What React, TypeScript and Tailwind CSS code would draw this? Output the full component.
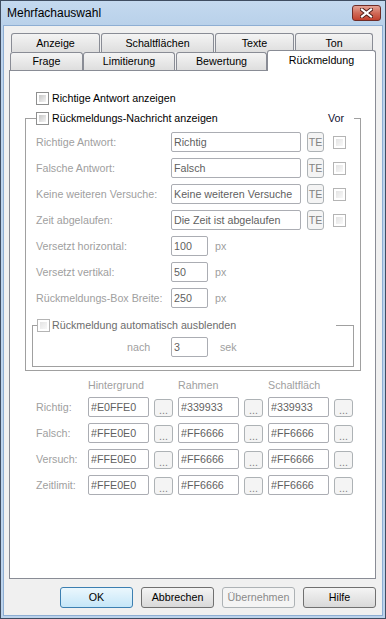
import React from "react";

type BoxProps = { disabled?: boolean; className?: string };

// kleines Windows-7-Kontrollkästchen
const Box: React.FC<BoxProps> = ({ disabled = false, className = "" }) =>
  disabled ? (
    <span className={`block h-[13px] w-[13px] shrink-0 border border-[#b4b4b4] bg-white p-[2px] ${className}`}>
      <span className="block h-full w-full bg-linear-to-br from-[#e4e4e4] to-[#f8f8f8]" />
    </span>
  ) : (
    <span className={`block h-[13px] w-[13px] shrink-0 border border-[#8e8f8f] bg-white p-[2px] ${className}`}>
      <span className="block h-full w-full bg-linear-to-br from-[#c8c8c8] to-[#f4f4f4]" />
    </span>
  );

const Field: React.FC<{ value: string; w: string }> = ({ value, w }) => (
  <input
    readOnly
    value={value}
    className={`h-[20px] shrink-0 rounded-[2px] border border-[#abadb3] bg-white px-[2px] text-[#5f5f5f] outline-none ${w}`}
  />
);

const SmallBtn: React.FC<{ label: string; className?: string }> = ({ label, className = "" }) => (
  <button
    type="button"
    className={`flex shrink-0 items-center justify-center rounded-[3px] border border-[#adb2b5] bg-[#f4f4f4] text-[#838383] ${className}`}
  >
    {label}
  </button>
);

const rowTabs = [
  { label: "Anzeige", cls: "ml-[2px] w-[89px]" },
  { label: "Schaltflächen", cls: "ml-[1px] w-[113px]" },
  { label: "Texte", cls: "ml-[1px] w-[79px]" },
  { label: "Ton", cls: "ml-[1px] w-[78px]" },
];

const frontTabs = [
  { label: "Frage", cls: "ml-[1px] w-[73px]" },
  { label: "Limitierung", cls: "w-[92px]" },
  { label: "Bewertung", cls: "ml-[1px] w-[91px]" },
];

const tabClass =
  "flex items-center justify-center rounded-t-[3px] border border-b-0 border-[#898c95] bg-linear-to-b from-[#f4f4f4] to-[#dedede]";

const texts = [
  { label: "Richtige Antwort:", value: "Richtig" },
  { label: "Falsche Antwort:", value: "Falsch" },
  { label: "Keine weiteren Versuche:", value: "Keine weiteren Versuche" },
  { label: "Zeit abgelaufen:", value: "Die Zeit ist abgelaufen" },
];

const numbers = [
  { label: "Versetzt horizontal:", value: "100" },
  { label: "Versetzt vertikal:", value: "50" },
  { label: "Rückmeldungs-Box Breite:", value: "250" },
];

const colors = [
  { label: "Richtig:", values: ["#E0FFE0", "#339933", "#339933"] },
  { label: "Falsch:", values: ["#FFE0E0", "#FF6666", "#FF6666"] },
  { label: "Versuch:", values: ["#FFE0E0", "#FF6666", "#FF6666"] },
  { label: "Zeitlimit:", values: ["#FFE0E0", "#FF6666", "#FF6666"] },
];

const App: React.FC = () => {
  return (
    <div className="h-[619px] w-[386px] overflow-hidden border border-[#3f4d61] bg-[#bcd3ec] font-['Liberation_Sans',Arial,sans-serif] text-[10.7px] leading-[13px] text-black">
      <div className="flex h-full flex-col px-[2px] pb-[2px]">
        {/* Titelleiste */}
        <div className="-mx-[2px] flex h-[24px] shrink-0 items-center justify-between bg-linear-to-b from-[#c4d9ef] to-[#b9d1ea] pl-[6px] pr-[4px]">
          <span className="text-[12px] text-black">Mehrfachauswahl</span>
          <button
            type="button"
            className="flex h-[16px] w-[29px] items-center justify-center rounded-[3px] border border-[#6e2c27] bg-linear-to-b from-[#e4a395] via-[#d06a58] to-[#c2402c]"
            aria-label="Schließen"
          >
            <svg width="13" height="10" viewBox="0 0 13 10">
              <path d="M2 1.5 L11 8.5 M11 1.5 L2 8.5" stroke="#4a1a16" strokeWidth="4" strokeLinecap="square" />
              <path d="M2 1.5 L11 8.5 M11 1.5 L2 8.5" stroke="#ffffff" strokeWidth="2.2" strokeLinecap="square" />
            </svg>
          </button>
        </div>

        {/* Inhalt */}
        <div className="flex flex-1 flex-col border border-[#8eaed3] bg-[#f0f0f0]">
          <div className="ml-[5px] mt-[7px] w-[367px]">
            <div className="flex h-[19px]">
              {rowTabs.map((t) => (
                <div key={t.label} className={`${tabClass} ${t.cls}`}>
                  {t.label}
                </div>
              ))}
            </div>
            <div className="flex h-[18px] items-end">
              {frontTabs.map((t) => (
                <div key={t.label} className={`${tabClass} h-[18px] ${t.cls}`}>
                  {t.label}
                </div>
              ))}
              <div className="relative z-10 -mb-px flex h-[21px] w-[109px] items-start justify-center rounded-t-[3px] border border-b-0 border-[#898c95] bg-white pt-[3px]">
                Rückmeldung
              </div>
            </div>

            {/* Register Rückmeldung */}
            <div className="h-[509px] border border-[#898c95] bg-white">
              <div className="ml-[26px] mt-[21px] flex h-[13px] items-center">
                <Box />
                <span className="ml-[3px]">Richtige Antwort anzeigen</span>
              </div>

              <div className="ml-[15px] mt-[7px] w-[336px]">
                <div className="flex h-[13px]">
                  <div className="mt-[6px] w-[11px] border-l border-t border-[#a0a0a0]" />
                  <Box />
                  <span className="ml-[3px]">Rückmeldungs-Nachricht anzeigen</span>
                  <div className="flex-1" />
                  <span className="text-[#101030]">Vor</span>
                  <div className="w-[10px]" />
                  <div className="mt-[6px] w-[7px] border-r border-t border-[#a0a0a0]" />
                </div>

                <div className="border-x border-b border-[#a0a0a0] pb-[3px] pt-[7px]">
                  <div className="flex flex-col gap-[6px] pl-[10px]">
                    {texts.map((r) => (
                      <div key={r.label} className="flex h-[20px] items-center">
                        <span className="w-[135px] shrink-0 text-[#a0a0a0]">{r.label}</span>
                        <Field value={r.value} w="w-[130px]" />
                        <SmallBtn label="TE" className="ml-[6px] h-[20px] w-[17px]" />
                        <Box disabled className="ml-[9px]" />
                      </div>
                    ))}
                    {numbers.map((r) => (
                      <div key={r.label} className="flex h-[20px] items-center">
                        <span className="w-[135px] shrink-0 text-[#a0a0a0]">{r.label}</span>
                        <Field value={r.value} w="w-[37px]" />
                        <span className="ml-[7px] text-[#a0a0a0]">px</span>
                      </div>
                    ))}
                  </div>

                  <div className="mx-[6px] mt-[11px]">
                    <div className="flex h-[13px]">
                      <div className="mt-[6px] w-[5px] border-l border-t border-[#a0a0a0]" />
                      <Box disabled />
                      <span className="ml-[2px] text-[#6d6d6d]">Rückmeldung automatisch ausblenden</span>
                      <div className="flex-1" />
                      <div className="mt-[6px] w-[18px] border-r border-t border-[#a0a0a0]" />
                    </div>
                    <div className="border-x border-b border-[#a0a0a0] pb-[9px] pt-[5px]">
                      <div className="flex h-[20px] items-center">
                        <span className="ml-[94px] w-[44px] shrink-0 text-[#a0a0a0]">nach</span>
                        <Field value="3" w="w-[37px]" />
                        <span className="ml-[12px] text-[#a0a0a0]">sek</span>
                      </div>
                    </div>
                  </div>
                </div>
              </div>

              {/* Farben */}
              <div className="ml-[26px]">
                <div className="mt-[7px] flex h-[14px] items-center pl-[52px] text-[#a0a0a0]">
                  <span className="w-[90px]">Hintergrund</span>
                  <span className="w-[90px]">Rahmen</span>
                  <span>Schaltfläch</span>
                </div>
                <div className="mt-[5px] flex flex-col gap-[6px]">
                  {colors.map((r) => (
                    <div key={r.label} className="flex h-[20px] items-center">
                      <span className="w-[52px] shrink-0 text-[#a0a0a0]">{r.label}</span>
                      {r.values.map((v, i) => (
                        <React.Fragment key={i}>
                          <Field value={v} w={i === 0 ? "w-[61px]" : "ml-[5px] w-[61px]"} />
                          <SmallBtn label="..." className="ml-[5px] mt-[2px] h-[18px] w-[19px] items-end pb-[2px] leading-[8px]" />
                        </React.Fragment>
                      ))}
                    </div>
                  ))}
                </div>
              </div>
            </div>
          </div>

          {/* Schaltflächen */}
          <div className="mt-[8px] flex justify-end gap-[8px] pr-[6px]">
            <button
              type="button"
              className="h-[21px] w-[73px] rounded-[3px] border border-[#3c7fb1] bg-linear-to-b from-[#ebf7fd] to-[#c5e6f8] text-black"
            >
              OK
            </button>
            <button
              type="button"
              className="h-[21px] w-[73px] rounded-[3px] border border-[#707070] bg-linear-to-b from-[#f4f4f4] to-[#d9d9d9] text-black"
            >
              Abbrechen
            </button>
            <button
              type="button"
              className="h-[21px] w-[73px] rounded-[3px] border border-[#adb2b5] bg-[#f4f4f4] text-[#8a8a8a]"
            >
              Übernehmen
            </button>
            <button
              type="button"
              className="h-[21px] w-[73px] rounded-[3px] border border-[#707070] bg-linear-to-b from-[#f4f4f4] to-[#d9d9d9] text-black"
            >
              Hilfe
            </button>
          </div>
        </div>
      </div>
    </div>
  );
};

export default App;
